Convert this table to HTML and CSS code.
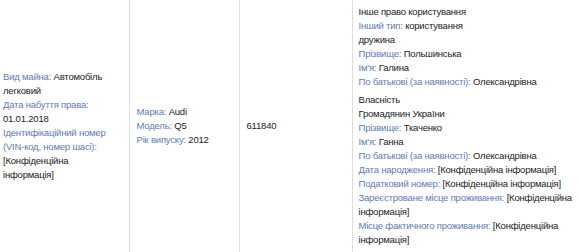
FILE: index.html
```html
<!DOCTYPE html>
<html lang="uk">
<head>
<meta charset="utf-8">
<link rel="stylesheet" href="styles.css">
</head>
<body>
<table class="decl">
  <colgroup>
    <col class="c1"><col class="c2"><col class="c3"><col class="c4">
  </colgroup>
  <tr>
    <td class="first">
      <span class="lbl">Вид майна:</span> Автомобіль легковий<br>
      <span class="lbl">Дата набуття права:</span> 01.01.2018<br>
      <span class="lbl">Ідентифікаційний номер (VIN-код, номер шасі):</span> [Конфіденційна інформація]
    </td>
    <td>
      <span class="lbl">Марка:</span> Audi<br>
      <span class="lbl">Модель:</span> Q5<br>
      <span class="lbl">Рік випуску:</span> 2012
    </td>
    <td>611840</td>
    <td class="owners">
      <div class="owner">
        Інше право користування<br>
        <span class="lbl">Інший тип:</span> користування<br>
        дружина<br>
        <span class="lbl">Прізвище:</span> Польшинська<br>
        <span class="lbl">Ім'я:</span> Галина<br>
        <span class="lbl">По батькові (за наявності):</span> Олександрівна
      </div>
      <div class="owner">
        Власність<br>
        Громадянин України<br>
        <span class="lbl">Прізвище:</span> Ткаченко<br>
        <span class="lbl">Ім'я:</span> Ганна<br>
        <span class="lbl">По батькові (за наявності):</span> Олександрівна<br>
        <span class="lbl">Дата народження:</span> [Конфіденційна інформація]<br>
        <span class="lbl">Податковий номер:</span> [Конфіденційна інформація]<br>
        <span class="lbl">Зареєстроване місце проживання:</span> [Конфіденційна інформація]<br>
        <span class="lbl">Місце фактичного проживання:</span> [Конфіденційна інформація]
      </div>
    </td>
  </tr>
</table>
</body>
</html>
```
FILE: styles.css
```css
html, body {
  margin: 0;
  padding: 0;
  background: #fff;
  overflow: hidden;
}
body {
  font-family: "Liberation Sans", Arial, sans-serif;
  font-size: 9.5px;
  letter-spacing: -0.2px;
  line-height: 14px;
  color: #222;
}
.decl {
  border-collapse: collapse;
  table-layout: fixed;
  width: 579px;
}
.c1 { width: 129px; }
.c2 { width: 110px; }
.c3 { width: 113px; }
.c4 { width: 227px; }
.decl td {
  vertical-align: middle;
  padding: 5px 6px 6px 7px;
  border-left: 1px solid #ddd;
}
.decl td.first {
  border-left: none;
  padding-left: 3px;
  padding-right: 14px;
}
.decl td.owners {
  padding-left: 6px;
  padding-right: 0;
}
.lbl {
  color: #5b7cb3;
}
.owner + .owner {
  margin-top: 4px;
}
```
